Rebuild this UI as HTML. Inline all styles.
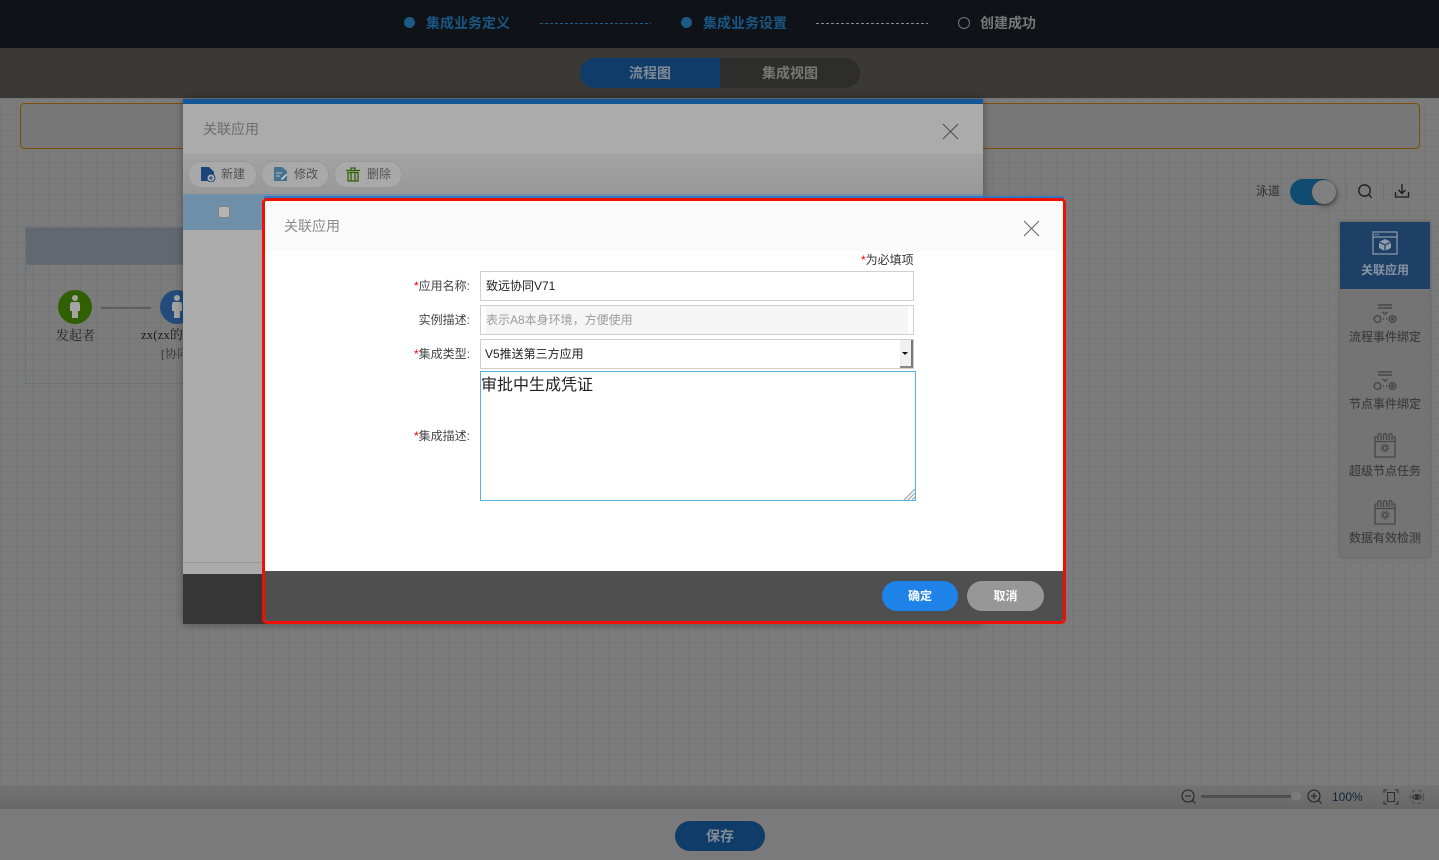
<!DOCTYPE html>
<html><head><meta charset="utf-8"><style>
html,body{margin:0;padding:0}
body{width:1439px;height:860px;overflow:hidden;position:relative;background:#7b7b7b;font-family:"Liberation Sans","Noto Sans CJK SC",sans-serif;font-size:12px}
.a{position:absolute;white-space:nowrap}
.grid{background-color:#7b7b7b;background-image:linear-gradient(#767676 1px,transparent 1px),linear-gradient(90deg,#767676 1px,transparent 1px);background-size:16px 16px}
.lab{right:969px;font-size:12px;color:#444;line-height:16px}
.lab i,.req{color:#f00;font-style:normal}
.side{left:1340px;width:90px;text-align:center;color:#3e3e3e;font-size:12px;font-weight:500;line-height:16px}
.tb{top:161px;height:25px;border:1px solid #999;border-radius:13px;background:#a9a9a9;color:#555;line-height:25px;box-sizing:content-box}
.dash{height:1px;background:repeating-linear-gradient(90deg,var(--c) 0 3px,transparent 3px 5px)}
</style></head><body>
<div class="a grid" style="left:0;top:98px;width:1439px;height:687px"></div>

<!-- top -->
<div class="a" style="left:0;top:0;width:1439px;height:48px;background:#0f1217"></div>
<div class="a" style="left:404px;top:17px;width:11px;height:11px;border-radius:50%;background:#1c5a85"></div>
<div class="a" style="left:426px;top:13px;font-size:14px;font-weight:700;line-height:20px;color:#1b5582">集成业务定义</div>
<div class="a dash" style="left:540px;top:23px;width:111px;--c:#1f5f8f"></div>
<div class="a" style="left:681px;top:17px;width:11px;height:11px;border-radius:50%;background:#1c5a85"></div>
<div class="a" style="left:703px;top:13px;font-size:14px;font-weight:700;line-height:20px;color:#1b5582">集成业务设置</div>
<div class="a dash" style="left:816px;top:23px;width:112px;--c:#8a8a8a"></div>
<div class="a" style="left:958px;top:17px;width:10px;height:10px;border-radius:50%;border:1px solid #777"></div>
<div class="a" style="left:980px;top:13px;font-size:14px;font-weight:700;line-height:20px;color:#777">创建成功</div>

<div class="a" style="left:0;top:48px;width:1439px;height:50px;background:#3a3935"></div>
<div class="a" style="left:580px;top:58px;width:140px;height:30px;border-radius:15px 0 0 15px;background:#0f3c69;color:#808b96;font-size:14px;font-weight:700;line-height:30px;text-align:center">流程图</div>
<div class="a" style="left:720px;top:58px;width:140px;height:30px;border-radius:0 15px 15px 0;background:#2d2d2c;color:#777;font-size:14px;font-weight:700;line-height:30px;text-align:center">集成视图</div>

<!-- orange box -->
<div class="a" style="left:20px;top:103px;width:1398px;height:44px;border:1px solid #7a4e08;border-radius:4px;background:#777"></div>

<!-- swimlane -->
<div class="a" style="left:25px;top:227px;width:300px;height:155px;border:1px solid #6a7174"></div>
<div class="a" style="left:26px;top:228px;width:300px;height:36px;background:#626870;border-bottom:1px solid #666c71"></div>
<svg class="a" style="left:58px;top:290px" width="140" height="36" viewBox="0 0 140 36">
<circle cx="17" cy="17" r="17" fill="#306002"/><circle cx="119" cy="17" r="17" fill="#234c7c"/>
<path d="M43 18H93" stroke="#5e5e5e" stroke-width="2"/>
<g fill="#a4a4a4"><circle cx="17" cy="8" r="3"/><path d="M13 12h8l1 2v7h-2v7h-6v-7h-2v-7z"/><circle cx="119" cy="8" r="3"/><path d="M115 12h8l1 2v7h-2v7h-6v-7h-2v-7z"/></g>
</svg>
<div class="a" style="left:56px;top:327px;font-family:'Liberation Serif','Noto Serif CJK SC',serif;font-size:13px;line-height:18px;color:#222">发起者</div>
<div class="a" style="left:141px;top:326px;font-family:'Liberation Serif','Noto Serif CJK SC',serif;font-size:13px;line-height:18px;color:#1a1a1a">zx(zx的</div>
<div class="a" style="left:161px;top:346px;font-family:'Liberation Serif','Noto Serif CJK SC',serif;font-size:12px;line-height:16px;color:#333">[协同</div>

<!-- right tools -->
<div class="a" style="left:1256px;top:183px;font-size:12px;line-height:17px;color:#2f2f2f">泳道</div>
<div class="a" style="left:1290px;top:179px;width:46px;height:26px;border-radius:13px;background:#104c70"></div>
<div class="a" style="left:1312px;top:180px;width:24px;height:24px;border-radius:50%;background:#808080;box-shadow:1px 2px 4px #444"></div>
<div class="a" style="left:1346px;top:184px;height:16px;border-left:1px solid #707070"></div>
<div class="a" style="left:1383px;top:184px;height:16px;border-left:1px solid #707070"></div>
<svg class="a" style="left:1356px;top:182px" width="18" height="18" fill="none" stroke="#1c1c1c" stroke-width="1.300"><circle cx="8.500" cy="8.500" r="5.700"/><path d="M12.700 12.700l3 3"/></svg>
<svg class="a" style="left:1394px;top:183px" width="17" height="16" fill="none" stroke="#1c1c1c" stroke-width="1.300"><path d="M1.500 9v5h13V9M8 1v9M4.500 7L8 10.500 11.500 7"/></svg>

<div class="a" style="left:1340px;top:222px;width:90px;height:335px;background:#747474;box-shadow:0 0 3px #555"></div>
<div class="a" style="left:1340px;top:222px;width:90px;height:67px;background:#1e3f66"></div>
<svg class="a" style="left:1372px;top:231px" width="26" height="24" fill="none" stroke="#8e9cab" stroke-width="1.200"><rect x="1" y="1" width="24" height="22"/><path d="M1 6h24"/><path d="M3 3.500h5" stroke-dasharray="1.500 1"/><path d="M13 8l6 3v6l-6 3-6-3v-6z" fill="#8e9cab" stroke="none"/><path d="M7 11l6 3 6-3M13 14v6" stroke="#1e3f66"/></svg>
<div class="a side" style="top:262px;color:#8794a3;font-weight:700">关联应用</div>

<svg class="a" style="left:1372px;top:303px" width="26" height="21" fill="none" stroke="#474747" stroke-width="1.400"><path d="M6 2h14M6 5h14M10.500 9l2.500 2 2.500-2M11 16h1M14 16h1"/><circle cx="5.500" cy="16" r="3.300"/><circle cx="20.500" cy="16" r="3.300"/><circle cx="20.500" cy="16" r="1" fill="#474747"/></svg>
<div class="a side" style="top:329px">流程事件绑定</div>
<svg class="a" style="left:1372px;top:370px" width="26" height="21" fill="none" stroke="#474747" stroke-width="1.400"><path d="M6 2h14M6 5h14M10.500 9l2.500 2 2.500-2M11 16h1M14 16h1"/><circle cx="5.500" cy="16" r="3.300"/><circle cx="20.500" cy="16" r="3.300"/><circle cx="20.500" cy="16" r="1" fill="#474747"/></svg>
<div class="a side" style="top:396px">节点事件绑定</div>
<svg class="a" style="left:1374px;top:432px" width="22" height="26" fill="none" stroke="#474747" stroke-width="1.300"><path d="M1 5v20h20V5h-2M1 5h2M1 9.500h20"/><path d="M4 8V3a1.500 1.500 0 0 1 3 0v5M9.500 8V3a1.500 1.500 0 0 1 3 0v5M15 8V3a1.500 1.500 0 0 1 3 0v5"/><circle cx="11" cy="16" r="2.200" stroke-width="1.500"/><circle cx="11" cy="16" r="4" stroke-width="1" stroke-dasharray="1.500 1.300"/></svg>
<div class="a side" style="top:463px">超级节点任务</div>
<svg class="a" style="left:1374px;top:499px" width="22" height="26" fill="none" stroke="#474747" stroke-width="1.300"><path d="M1 5v20h20V5h-2M1 5h2M1 9.500h20"/><path d="M4 8V3a1.500 1.500 0 0 1 3 0v5M9.500 8V3a1.500 1.500 0 0 1 3 0v5M15 8V3a1.500 1.500 0 0 1 3 0v5"/><circle cx="11" cy="16" r="2.200" stroke-width="1.500"/><circle cx="11" cy="16" r="4" stroke-width="1" stroke-dasharray="1.500 1.300"/></svg>
<div class="a side" style="top:530px">数据有效检测</div>

<!-- bottom -->
<div class="a" style="left:0;top:785px;width:1439px;height:24px;background:linear-gradient(#747474,#686868)"></div>
<div class="a" style="left:0;top:809px;width:1439px;height:51px;background:#7a7a7a"></div>
<div class="a" style="left:675px;top:821px;width:90px;height:30px;border-radius:15px;background:#0f3c69;color:#838c96;font-size:14px;font-weight:700;line-height:30px;text-align:center">保存</div>
<svg class="a" style="left:1180px;top:788px" width="18" height="18" fill="none" stroke="#222" stroke-width="1.100"><circle cx="8" cy="8" r="6"/><path d="M5 8h6M12.500 12.500l3 3"/></svg>
<div class="a" style="left:1201px;top:795px;width:92px;height:3px;background:#4f4f4f"></div>
<div class="a" style="left:1291px;top:791px;width:10px;height:10px;border-radius:50%;background:#7a7a7a"></div>
<svg class="a" style="left:1306px;top:788px" width="18" height="18" fill="none" stroke="#222" stroke-width="1.100"><circle cx="8" cy="8" r="6"/><path d="M5 8h6M8 5v6M12.500 12.500l3 3"/></svg>
<div class="a" style="left:1332px;top:789px;font-size:12px;line-height:16px;color:#10263c">100%</div>
<svg class="a" style="left:1383px;top:789px" width="16" height="16" fill="none" stroke="#2c2c2c" stroke-width="1"><rect x="4.500" y="3.500" width="7" height="9"/><path d="M1 4V1h3M12 1h3v3M15 12v3h-3M4 15H1v-3"/></svg>
<svg class="a" style="left:1409px;top:789px" width="16" height="16" fill="none" stroke="#333" stroke-width="1.100"><path d="M3.500 8c2.500-3.300 6.500-3.300 9 0-2.500 3.300-6.500 3.300-9 0z"/><circle cx="8" cy="8" r="1.500" fill="#333"/><circle cx="8" cy="8" r="6.800" stroke="#4c4c4c" stroke-dasharray="4 2.500"/></svg>

<!-- first dialog -->
<div class="a" style="left:183px;top:99px;width:800px;height:525px;background:#ababab;box-shadow:0 0 8px rgba(0,0,0,.35)"></div>
<div class="a" style="left:183px;top:99px;width:800px;height:5px;background:#155697"></div>
<div class="a" style="left:183px;top:154px;width:800px;height:41px;background:linear-gradient(#a3a3a3,#989898)"></div>
<div class="a" style="left:203px;top:120px;font-size:14px;line-height:18px;color:#6c6c6c">关联应用</div>
<svg class="a" style="left:942px;top:123px" width="17" height="17" stroke="#4a4a4a"><path d="M1 1l15 15M16 1L1 16"/></svg>

<div class="a tb" style="left:188px;width:67px"></div>
<div class="a tb" style="left:261px;width:66px"></div>
<div class="a tb" style="left:334px;width:66px"></div>
<svg class="a" style="left:201px;top:167px" width="15" height="15"><path d="M0 0h8l5 5v9H0z" fill="#1b447c"/><circle cx="10" cy="11" r="4" fill="#adadad" stroke="#1b447c"/><path d="M8 11h4M10 9v4" stroke="#1b447c"/></svg>
<svg class="a" style="left:274px;top:167px" width="14" height="15"><path d="M0 0h8l5 4v10H0z" fill="#437390"/><path d="M2 6h6M2 9h4" stroke="#bbb"/><path d="M7 12l5-5 1 1-5 5z" fill="#ddd"/></svg>
<svg class="a" style="left:346px;top:167px" width="14" height="15" fill="none" stroke="#316007" stroke-width="1.300"><path d="M0 3.500h14M5 3V1h4v2"/><path d="M2 5.500h10V14H2zM5 6v8M9 6v8"/></svg>
<div class="a" style="left:221px;top:166px;font-size:12px;line-height:17px;color:#525252">新建</div>
<div class="a" style="left:294px;top:166px;font-size:12px;line-height:17px;color:#525252">修改</div>
<div class="a" style="left:367px;top:166px;font-size:12px;line-height:17px;color:#525252">删除</div>

<div class="a" style="left:183px;top:194px;width:800px;height:36px;background:#7090aa"></div>
<div class="a" style="left:218px;top:206px;width:10px;height:10px;border:1px solid #808080;border-radius:2px;background:#b4b4b4"></div>
<div class="a" style="left:183px;top:562px;width:800px;border-top:1px solid #969696"></div>
<div class="a" style="left:183px;top:574px;width:800px;height:50px;background:#363636"></div>

<!-- second dialog -->
<div class="a" style="left:264px;top:196px;width:800px;height:4px;background:#2f78c4;border-radius:3px"></div>
<div class="a" style="left:262px;top:198px;width:804px;height:426px;box-sizing:border-box;border:3px solid #f01000;border-radius:5px;background:#fff;overflow:hidden">
  <div class="a" style="left:0;top:0;width:798px;height:50px;background:#fafafa"></div>
  <div class="a" style="left:19px;top:16px;font-size:14px;line-height:18px;color:#8a8a8a">关联应用</div>
  <svg class="a" style="left:758px;top:19px" width="17" height="17" stroke="#666"><path d="M1 1l15 15M16 1L1 16"/></svg>
  <div class="a" style="left:0;top:370px;width:798px;height:50px;background:#4f4f4f"></div>
  <div class="a" style="left:617px;top:380px;width:76px;height:30px;border-radius:15px;background:#1e82e8;color:#fff;font-size:12px;font-weight:700;line-height:30px;text-align:center">确定</div>
  <div class="a" style="left:702px;top:380px;width:77px;height:30px;border-radius:15px;background:#979797;color:#fff;font-size:12px;font-weight:700;line-height:30px;text-align:center">取消</div>
</div>

<div class="a" style="left:861px;top:252px;font-size:12px;line-height:16px;color:#333"><span class="req">*</span>为必填项</div>
<div class="a lab" style="top:278px"><i>*</i>应用名称:</div>
<div class="a lab" style="top:312px">实例描述:</div>
<div class="a lab" style="top:346px"><i>*</i>集成类型:</div>
<div class="a lab" style="top:428px"><i>*</i>集成描述:</div>

<div class="a" style="left:480px;top:271px;height:28px;border:1px solid #d0d0d0;background:#fff;padding-left:5px;line-height:28px;font-size:12px;color:#222;width:427px">致远协同V71</div>
<div class="a" style="left:480px;top:305px;width:432px;height:28px;border:1px solid #d0d0d0;background:#fff"></div>
<div class="a" style="left:486px;top:306px;width:422px;height:28px;background:#f5f5f5;line-height:28px;font-size:12px;color:#9b9b9b">表示A8本身环境，方便使用</div>
<div class="a" style="left:480px;top:339px;width:432px;height:28px;border:1px solid #d0d0d0;background:#fff;line-height:28px;font-size:12px;color:#222;text-indent:4px">V5推送第三方应用</div>
<div class="a" style="left:900px;top:340px;width:13px;height:28px;box-sizing:border-box;background:#f0f0f0;border-right:2px solid #777;border-bottom:2px solid #888"></div>
<div class="a" style="left:902px;top:352px;width:0;height:0;border:3px solid transparent;border-top:3px solid #111;border-bottom:0"></div>

<div class="a" style="left:480px;top:371px;width:434px;height:128px;border:1px solid #5cb0e0;background:#fff"></div>
<div class="a" style="left:481px;top:375px;font-size:16px;line-height:21px;color:#222">审批中生成凭证</div>
<svg class="a" style="left:903px;top:488px" width="12" height="12" stroke="#aaa" stroke-width="1.300"><path d="M12 1L1 12M12 5L5 12M12 9l-3 3"/></svg>
</body></html>
